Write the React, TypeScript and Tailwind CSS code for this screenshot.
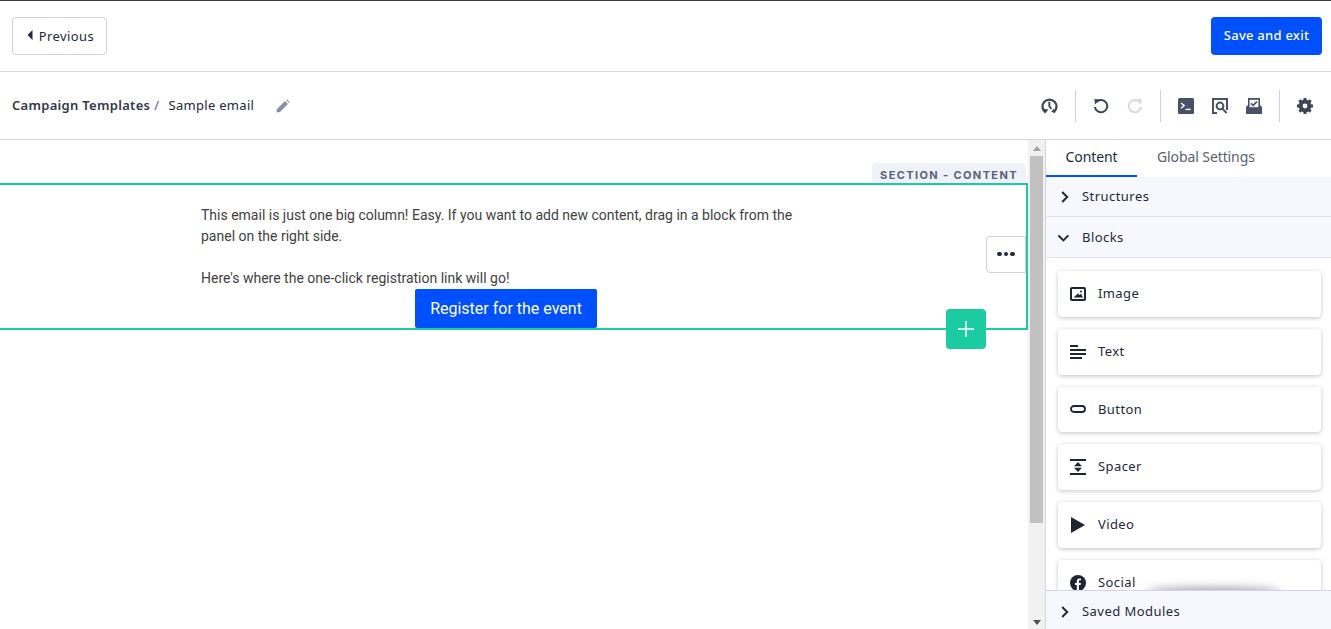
import { ReactNode } from 'react';

const HistoryIcon = () => (
  <svg width="18" height="18" viewBox="0 0 18 18" fill="none" stroke="#3f4558" strokeWidth="2.4">
    <path d="M4.4 15.4 A7.4 7.4 0 1 1 13.6 15.4" />
    <path d="M0.8 11.6 L4.6 17 L7.8 12.6 Z" fill="#3f4558" stroke="none" />
    <path d="M15 16.6 L10.8 15 L13.8 11.6 Z" fill="#3f4558" stroke="none" />
    <path d="M8.8 4.4 V9.2 L11 12.2" strokeWidth="2" />
  </svg>
);

const UndoIcon = ({ color, flip }: { color: string; flip?: boolean }) => (
  <svg width="16" height="16" viewBox="0 0 16 16" fill="none" className={flip ? '-scale-x-100' : ''}>
    <path d="M3.6 3.8 A6.2 6.2 0 1 1 1.9 9" stroke={color} strokeWidth="2" />
    <path d="M1.4 1 L7 1.4 L2 6.6 Z" fill={color} />
  </svg>
);

const TerminalIcon = () => (
  <svg width="16" height="16" viewBox="0 0 16 16">
    <rect width="16" height="16" rx="1.5" fill="#4a5068" />
    <path d="M3 5 L6.2 7.6 L3 10.2" fill="none" stroke="#fff" strokeWidth="1.4" />
    <path d="M7.6 11.4 H12.6" stroke="#fff" strokeWidth="1.4" />
  </svg>
);

const PreviewIcon = () => (
  <svg width="17" height="16" viewBox="0 0 17 16" fill="none" stroke="#4a5068">
    <path d="M5 15 H1 V1 H15 V12" strokeWidth="2" />
    <circle cx="8" cy="8" r="3.4" strokeWidth="2" />
    <path d="M10.4 10.6 L14.6 15" strokeWidth="2" />
  </svg>
);

const InboxCheckIcon = () => (
  <svg width="16" height="16" viewBox="0 0 16 16">
    <path d="M2 0 H14 V7 L16 9 V16 H0 V9 L2 7 Z" fill="#4a5068" />
    <rect x="3.6" y="1.8" width="8.8" height="7.4" fill="#fff" />
    <path d="M5 5.4 L7.2 7.4 L11 3.6" fill="none" stroke="#4a5068" strokeWidth="1.7" />
  </svg>
);

const GearIcon = () => (
  <svg width="16" height="16" viewBox="0 0 16 16">
    <circle cx="8" cy="8" r="4.4" fill="none" stroke="#3f4558" strokeWidth="4" />
    <path
      d="M8 0 V16 M0 8 H16 M2.3 2.3 L13.7 13.7 M13.7 2.3 L2.3 13.7"
      stroke="#3f4558"
      strokeWidth="3"
      strokeDasharray="3 10 3"
    />
  </svg>
);

const Chevron = ({ down }: { down?: boolean }) => (
  <svg width="12" height="12" viewBox="0 0 12 12" fill="none" stroke="#23283a" strokeWidth="2">
    {down ? <path d="M0.4 3.4 L5.4 8.4 L10.4 3.4" /> : <path d="M3.2 1 L8.2 6 L3.2 11" />}
  </svg>
);

const ImageIcon = () => (
  <svg width="16" height="14" viewBox="0 0 16 14">
    <rect x="1" y="1" width="14" height="12" rx="1" fill="none" stroke="#1f2433" strokeWidth="2" />
    <path d="M3.5 10.5 L8 6.5 L9.5 8 L11 6.5 L13 10.5 Z" fill="#1f2433" />
    <circle cx="11" cy="4.6" r="1" fill="#1f2433" />
  </svg>
);

const TextIcon = () => (
  <svg width="16" height="14" viewBox="0 0 16 14" stroke="#1f2433" strokeWidth="1.8">
    <path d="M0 1 H8 M0 5 H16 M0 9 H16 M0 13 H12" />
  </svg>
);

const ButtonIcon = () => (
  <svg width="16" height="8" viewBox="0 0 16 8">
    <rect x="1" y="1" width="14" height="6" rx="3" fill="none" stroke="#1f2433" strokeWidth="1.8" />
  </svg>
);

const SpacerIcon = () => (
  <svg width="16" height="16" viewBox="0 0 16 16">
    <path d="M0 1 H16 M0 15 H16" stroke="#1f2433" strokeWidth="2" />
    <path d="M8 3 L12 7.3 H4 Z M8 13 L4 8.7 H12 Z" fill="#1f2433" />
  </svg>
);

const PlayIcon = () => (
  <svg width="14" height="16" viewBox="0 0 14 16">
    <path d="M0 0 L14 8 L0 16 Z" fill="#1f2433" />
  </svg>
);

const FacebookIcon = () => (
  <svg width="16" height="16" viewBox="0 0 16 16">
    <circle cx="8" cy="8" r="8" fill="#1f2433" />
    <path d="M6.8 16 V10 H5 V8 H6.8 V6.2 C6.8 4.4 8 3.4 9.4 3.4 L11 3.5 V5.3 H10 C9.2 5.3 9 5.8 9 6.4 V8 H11 L10.6 10 H9 V16 Z" fill="#fff" />
  </svg>
);

const blocks: { name: string; icon: ReactNode }[] = [
  { name: 'Image', icon: <ImageIcon /> },
  { name: 'Text', icon: <TextIcon /> },
  { name: 'Button', icon: <ButtonIcon /> },
  { name: 'Spacer', icon: <SpacerIcon /> },
  { name: 'Video', icon: <PlayIcon /> },
  { name: 'Social', icon: <FacebookIcon /> },
];

const App = () => {
  return (
    <div className='flex h-[629px] w-[1331px] flex-col overflow-hidden bg-white font-["Noto_Sans",sans-serif] text-[13px] text-[#23283a]'>
      <header className="flex h-[72px] shrink-0 items-center justify-between border-t border-b border-t-[#3a3a3a] border-b-[#d3d6e0] pr-[9px] pl-3">
        <button className="flex h-[38px] w-[95px] items-center justify-center gap-[6px] rounded border border-[#ccd1e0] pt-px pl-[2px] text-[13px] tracking-[0.4px]">
          <svg width="6" height="10" viewBox="0 0 6 10" className="-mt-[3px]">
            <path d="M5.5 0 V10 L0.5 5 Z" fill="#23283a" />
          </svg>
          Previous
        </button>
        <button className="h-[38px] w-[111px] rounded bg-[#0050ff] text-[13px] font-medium tracking-[0.25px] text-white">
          Save and exit
        </button>
      </header>

      <div className="flex h-[68px] shrink-0 items-center justify-between border-b border-[#d3d6e0] pl-3">
        <div className="flex items-center tracking-[0.3px]">
          <span className="font-semibold text-[#33384a]">Campaign Templates</span>
          <span className="ml-1 text-[#5a6072]">/</span>
          <span className="ml-[9px]">Sample email</span>
          <svg width="14" height="14" viewBox="0 0 14 14" className="ml-[22px]">
            <path d="M0.5 13.5 L1 10 L9 2 L12 5 L4 13 Z M10 1 L11 0.4 L13.6 3 L13 4 Z" fill="#8a90a8" />
          </svg>
        </div>
        <div className="flex items-center">
          <div className="flex w-[17px] justify-center"><HistoryIcon /></div>
          <div className="mx-[17px] h-8 w-px bg-[#ccd1e0]" />
          <UndoIcon color="#3f4558" />
          <div className="ml-[18px]"><UndoIcon color="#d5d9e5" flip /></div>
          <div className="mx-[17px] h-8 w-px bg-[#ccd1e0]" />
          <TerminalIcon />
          <div className="ml-[18px]"><PreviewIcon /></div>
          <div className="ml-[17px]"><InboxCheckIcon /></div>
          <div className="mx-[17px] h-8 w-px bg-[#ccd1e0]" />
          <div className="mr-[18px]"><GearIcon /></div>
        </div>
      </div>

      <div className="flex min-h-0 flex-1">
        <main className="flex min-w-0 flex-1 flex-col">
          <div className="flex h-[43px] shrink-0 items-end justify-end pr-[2px]">
            <div className="flex h-[20px] w-[154px] items-center justify-center rounded-t bg-[#f0f2fa] pt-[5px] font-['Inter',sans-serif] text-[11px] font-bold tracking-[0.125em] text-[#5b6178]">
              SECTION - CONTENT
            </div>
          </div>
          <section className="relative h-[147px] border-y-2 border-r-2 border-[#1bcba2] pt-[20px] pl-[201px] font-['Roboto',sans-serif] text-[14px] leading-[21px] text-[#3f3f3f]">
            <p className="w-[610px]">
              This email is just one big column! Easy. If you want to add new content, drag in a block from the panel on the right side.
            </p>
            <p className="mt-[21px]">Here's where the one-click registration link will go!</p>
            <button className="ml-[214px] flex h-[39px] w-[182px] items-center justify-center rounded-[2px] bg-[#0050ff] text-[16px] text-white">
              Register for the event
            </button>
            <button className="absolute top-[51px] right-0 flex h-[37px] w-[40px] items-center justify-center gap-[2px] rounded-l border border-[#ccd1e0] bg-white pb-px">
              <span className="size-[4.5px] rounded-full bg-[#23283a]" />
              <span className="size-[4.5px] rounded-full bg-[#23283a]" />
              <span className="size-[4.5px] rounded-full bg-[#23283a]" />
            </button>
            <button className="absolute top-[124px] right-[40px] flex size-[40px] items-center justify-center rounded bg-[#1bcba2]">
              <svg width="16" height="16" viewBox="0 0 16 16" stroke="#fff" strokeWidth="1.6">
                <path d="M8 0 V16 M0 8 H16" />
              </svg>
            </button>
          </section>
        </main>

        <div className="flex w-[18px] shrink-0 flex-col items-center border-r border-[#d3d6e0] bg-[#f1f1f1]">
          <svg width="8" height="5" viewBox="0 0 8 5" className="mt-[6px]">
            <path d="M4 0 L8 5 H0 Z" fill="#a3a3a3" />
          </svg>
          <div className="mt-[5px] h-[367px] w-[13px] bg-[#c1c1c1]" />
          <svg width="8" height="5" viewBox="0 0 8 5" className="mt-auto mb-[4px]">
            <path d="M4 5 L8 0 H0 Z" fill="#505050" />
          </svg>
        </div>

        <aside className="flex w-[285px] shrink-0 flex-col">
          <div className="flex h-[37px] shrink-0 text-[14px]">
            <div className="flex w-[91px] items-center justify-center border-b-2 border-[#0050ff] pb-[2px] tracking-[-0.1px]">
              Content
            </div>
            <div className="ml-5 flex items-center pb-[4px] tracking-[-0.1px] text-[#5a6072]">Global Settings</div>
          </div>
          <div className="flex h-10 shrink-0 items-center gap-[11px] border-b border-[#dfe2ea] bg-[#f6f8fd] pl-[13px] tracking-[0.45px]">
            <Chevron />
            Structures
          </div>
          <div className="flex h-[41px] shrink-0 items-center gap-[12px] border-b border-[#dfe2ea] bg-[#f6f8fd] pt-px pl-[12px] tracking-[0.45px]">
            <Chevron down />
            Blocks
          </div>
          <div className="relative flex min-h-0 flex-1 flex-col gap-[12px] overflow-hidden pt-[13px] pr-[10px] pl-3">
            {blocks.map((block) => (
              <div
                key={block.name}
                className="flex h-[45.75px] shrink-0 items-center rounded bg-white pl-3 tracking-[0.4px] shadow-[0_1px_4px_rgba(30,40,70,0.28)]"
              >
                <div className="flex w-[16px] justify-center">{block.icon}</div>
                <span className="ml-3">{block.name}</span>
              </div>
            ))}
            <div className="absolute bottom-[-7px] left-[100px] h-[9px] w-[135px] rounded-[50%] bg-[#999] blur-[5px]" />
          </div>
          <div className="z-10 flex h-[39px] shrink-0 items-center gap-[11px] border-t border-[#d3d6e0] bg-[#f6f8fd] pt-[3px] pl-[13px] tracking-[0.45px]">
            <Chevron />
            Saved Modules
          </div>
        </aside>
      </div>
    </div>
  );
};

export default App;
